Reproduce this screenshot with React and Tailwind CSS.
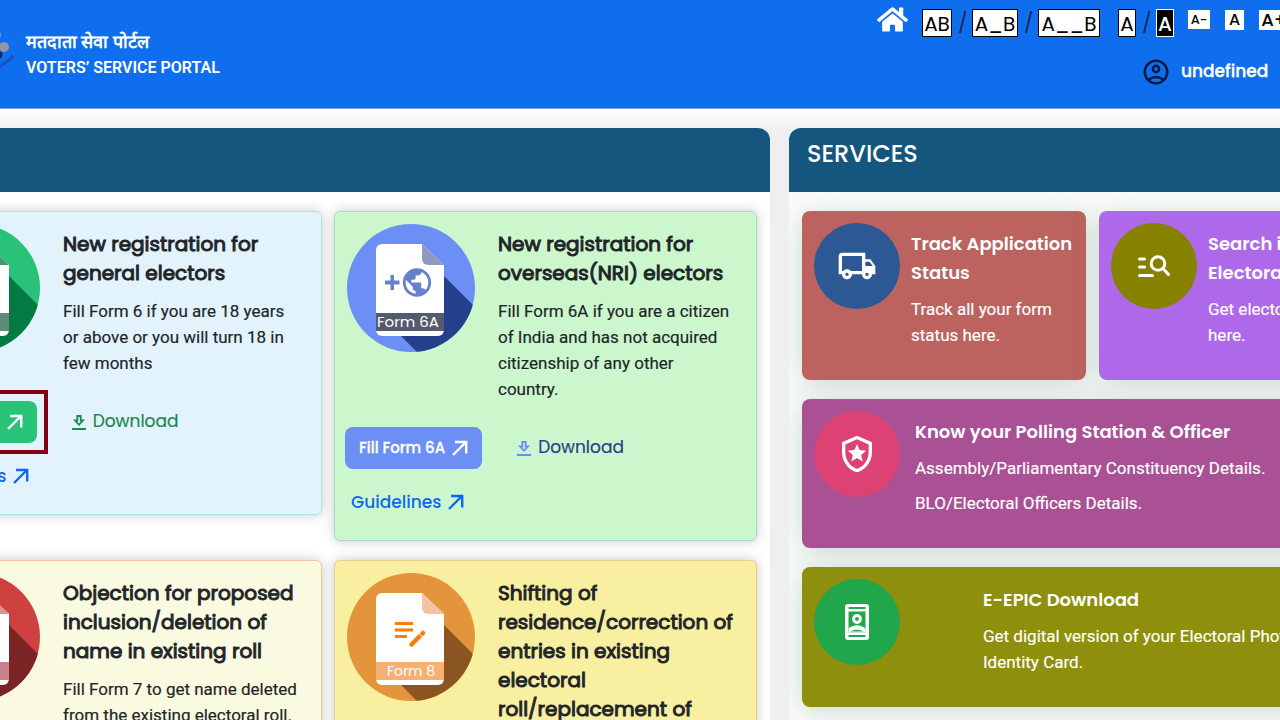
import React from 'react';
import { FaHome } from 'react-icons/fa';
import { MdPublic, MdOutlineLocalShipping, MdOutlineLocalPolice, MdOutlineAccountCircle } from 'react-icons/md';

const ArrowIcon = ({ className }) => (
    <svg viewBox="0 0 16 16" className={className} fill="none" stroke="currentColor" strokeWidth="2.4" aria-hidden="true">
        <path d="M1 15 14 2M3 2h11.200v11.500" />
    </svg>
);

const DownloadIcon = ({ className }) => (
    <svg viewBox="0 0 14 15" className={className} fill="none" stroke="currentColor" strokeWidth="1.8" aria-hidden="true">
        <path d="M5.300 1h3.400v4.500h2.300L7 9.800 3 5.500h2.300zM0 14h14" />
    </svg>
);

const SearchListIcon = () => (
    <svg viewBox="0 0 32 24" className="w-8 h-6" fill="none" stroke="currentColor" strokeWidth="3" strokeLinecap="round" aria-hidden="true">
        <path d="M1.500 5h5M1.500 13h5M1.500 21.500h13M25 14.500l5.500 6" />
        <circle cx="20" cy="9.500" r="6.800" />
    </svg>
);

const IdPhoneIcon = () => (
    <svg viewBox="0 0 24 36" className="w-6 h-9" aria-hidden="true">
        <rect x="0" y="0" width="24" height="36" rx="3" fill="currentColor" />
        <path d="M3.500 4h17M3.500 32h17" stroke="#21a64b" strokeWidth="1.800" />
        <rect x="3.500" y="7.500" width="17" height="21" fill="#21a64b" />
        <circle cx="12" cy="15" r="3.400" fill="none" stroke="currentColor" strokeWidth="3" />
        <path d="M3.500 25c4-5 13-5 17 0v3.500h-17z" fill="currentColor" />
        <path d="M5.500 27.500c3-2.500 10-2.500 13 0z" fill="#21a64b" />
    </svg>
);

// round badge with a sheet of paper and its long shadow
const FormBadge = ({ id, label, c, children }) => (
    <svg viewBox="0 0 128 128" className="w-32 h-32 flex-shrink-0" aria-hidden="true">
        <clipPath id={`badge-${id}`}><circle cx="64" cy="64" r="64" /></clipPath>
        <g clipPath={`url(#badge-${id})`}>
            <rect width="128" height="128" fill={c.disc} />
            <path d="M97 52 140 95v45H82L54 112z" fill={c.shade} />
        </g>
        <path d="M35 20h40l22 21v65a6 6 0 0 1-6 6H35a6 6 0 0 1-6-6V26a6 6 0 0 1 6-6z" fill="#fff" />
        <path d="M75 20l22 21H81a6 6 0 0 1-6-6z" fill={c.fold} />
        <rect x="29" y="89" width="68" height="18" fill={c.band} />
        <text x={label.length > 6 ? 61 : 64} y="103" textAnchor="middle" fill="#fff" fontSize={label.length > 6 ? 15 : 14} fontFamily="Poppins, Inter, sans-serif">{label}</text>
        {children}
    </svg>
);

const FORMS = [
    {
        id: '6', title: 'New registration for\ngeneral electors',
        text: 'Fill Form 6 if you are 18 years\nor above or you will turn 18 in\nfew months',
        card: 'bg-[#e2f3fb] border-[#a5ecdf]', button: 'bg-[#28c378]', marked: true,
        link: 'text-[#198754]', linkIcon: 'text-[#198754]',
        c: { disc: '#28c378', shade: '#037a41', fold: '#4a9370', band: '#5f8a73' },
    },
    {
        id: '6A', title: 'New registration for\noverseas(NRI) electors',
        text: 'Fill Form 6A if you are a citizen\nof India and has not acquired\ncitizenship of any other\ncountry.',
        card: 'bg-[#ccf7cd] border-[#a8d8c8]', button: 'bg-[#6b8ff5]',
        link: 'text-[#243f8c]', linkIcon: 'text-[#6b8ff5]',
        c: { disc: '#6b8ff5', shade: '#243f8c', fold: '#8f9bbd', band: '#555a6c' },
        art: (
            <g fill="#6581cc" color="#6581cc">
                <path d="M38 56.500h5.500V51h3.500v5.500h5.500v4H47V66h-3.500v-5.500H38z" />
                <MdPublic x="53" y="41.500" size="34" />
            </g>
        ),
    },
    {
        id: '7', title: 'Objection for proposed\ninclusion/deletion of\nname in existing roll',
        text: 'Fill Form 7 to get name deleted\nfrom the existing electoral roll.',
        card: 'bg-[#fafae0] border-[#f5c3a4]',
        c: { disc: '#cf4040', shade: '#7a2424', fold: '#dd9090', band: '#c98088' },
    },
    {
        id: '8', title: 'Shifting of\nresidence/correction of\nentries in existing\nelectoral\nroll/replacement of',
        card: 'bg-[#f9efa0] border-[#e8cf90]',
        c: { disc: '#e4943a', shade: '#8a5520', fold: '#f2c4a0', band: '#f5b073' },
        art: (
            <g stroke="#f97d0b" fill="none">
                <path d="M48 50.500h18M48 57h18M48 63.500h12" strokeWidth="3" />
                <path d="M64.500 71.500l8.500-8.500M75 61l1-1" strokeWidth="4.500" strokeLinecap="round" />
                <path d="M71.500 60l4.500 4.500" stroke="#fff" strokeWidth="1" />
            </g>
        ),
    },
];

const SERVICES = [
    {
        title: 'Track Application\nStatus', lines: ['Track all your form\nstatus here.'],
        card: 'bg-[#bc635f]', disc: 'bg-[#2c5894]', gap: 'gap-[11px]',
        icon: <MdOutlineLocalShipping size={40} />,
    },
    {
        title: 'Search in\nElectoral Roll', lines: ['Get electoral details\nhere.'],
        card: 'bg-[#ae69ea]', disc: 'bg-[#868200]', gap: 'gap-[11px]',
        icon: <SearchListIcon />,
    },
    {
        title: 'Know your Polling Station & Officer',
        lines: ['Assembly/Parliamentary Constituency Details.', 'BLO/Electoral Officers Details.'],
        card: 'bg-[#aa5095] col-span-2', disc: 'bg-[#dc4273]', gap: 'gap-[15px]',
        icon: <MdOutlineLocalPolice size={40} />,
    },
    {
        title: 'E-EPIC Download', lines: ['Get digital version of your Electoral Photo\nIdentity Card.'],
        card: 'bg-[#8e8f0c] col-span-2', disc: 'bg-[#21a64b]', gap: 'gap-[83px]',
        icon: <IdPhoneIcon />,
    },
];

const FormCard = ({ form }) => (
    <article className={`rounded-md border p-3 shadow-[0_0_12px_rgba(0,0,0,0.22)] ${form.card}`}>
        <div className="flex gap-[23px]">
            <FormBadge id={form.id} label={`Form ${form.id}`} c={form.c}>{form.art}</FormBadge>
            <div className="mt-1.5 text-[#212529] whitespace-pre">
                <h3 className="text-[20px] leading-[29px] [-webkit-text-stroke:0.05em]">{form.title}</h3>
                {form.text && <p className="mt-2.5 font-[Roboto] text-[17px] leading-[26px] [-webkit-text-stroke:0.01em]">{form.text}</p>}
            </div>
        </div>
        {form.button && (
            <>
                <div className="mt-[25px] flex items-center gap-[35px] whitespace-nowrap">
                    <div className={form.marked ? '-my-[11px] -ml-[13px] -mr-[11px] p-[7px] border-4 border-[#820014]' : '-ml-0.5'}>
                        <button className={`h-[42px] px-3.5 rounded-lg flex items-center gap-[7px] text-white text-[15px] font-medium [-webkit-text-stroke:0.02em] ${form.button}`}>
                            Fill Form {form.id} <ArrowIcon className="w-4 h-4" />
                        </button>
                    </div>
                    <a href="#download" className={`flex items-center gap-[7px] text-[17px] [-webkit-text-stroke:0.01em] ${form.link}`}>
                        <DownloadIcon className={`w-3.5 h-[15px] ${form.linkIcon}`} /> Download
                    </a>
                </div>
                <a href="#guidelines" className="mt-5 mb-[13px] ml-1 flex w-fit items-center gap-[7px] text-[17px] leading-[26px] font-medium text-[#0d66f5]">
                    Guidelines <ArrowIcon className="w-4 h-4" />
                </a>
            </>
        )}
    </article>
);

const ServiceCard = ({ s }) => (
    <article className={`rounded-lg p-3 pb-8 flex text-white shadow-[0_4px_28px_rgba(40,100,70,0.22)] ${s.gap} ${s.card}`}>
        <div className={`w-[86px] h-[86px] rounded-full flex-shrink-0 flex items-center justify-center ${s.disc}`}>{s.icon}</div>
        <div className="mt-1.5 whitespace-pre">
            <h3 className="text-[18px] leading-[29px] font-semibold">{s.title}</h3>
            {s.lines.map(l => <p key={l} className="mt-[9px] font-[Roboto] text-[17px] leading-[26px] [-webkit-text-stroke:0.01em]">{l}</p>)}
        </div>
    </article>
);

const Logo = () => (
    <svg viewBox="0 0 60 50" className="w-[60px] h-[50px]" aria-hidden="true">
        <circle cx="42" cy="10" r="5" fill="#6f9ccb" />
        <circle cx="50" cy="22" r="5" fill="#93979f" />
        <circle cx="45" cy="30" r="3.500" fill="#10295c" />
        <path d="M45 41C50 39 55 36 59 31" fill="none" stroke="#1f45a8" strokeWidth="3.500" strokeDasharray="1.500 0.800" />
    </svg>
);

const BOX = 'h-7 border text-[20px] leading-7';
const SMALL = 'bg-white text-black font-medium';

const Slash = () => <span className="w-2 text-center text-[20px] leading-7 text-[#10264f]">/</span>;

const Header = () => (
    <header className="h-[109px] bg-[#0e6eee] border-b border-[#7ba4f0] flex justify-between">
        <div className="flex pt-[25px] pl-[68px] gap-3 text-white">
            <Logo />
            <div className="pt-1 leading-[26px] font-bold font-[Roboto]">
                <p lang="hi" className="text-[18px] leading-[26px]">मतदाता सेवा पोर्टल</p>
                <p className="text-[16px] leading-[26px] font-semibold">VOTERS’ SERVICE PORTAL</p>
            </div>
        </div>
        <div className="w-[519px] pt-1 whitespace-nowrap">
            <div className="flex items-start">
                <a href="#home" aria-label="Home" className="text-white"><FaHome size={31} /></a>
                <div className="ml-3.5 mt-[5px] flex gap-1.5">
                    <button className={`${BOX} w-[30px] bg-white border-black`}>AB</button><Slash />
                    <button className={`${BOX} w-[46px] bg-white border-black`}>A_B</button><Slash />
                    <button className={`${BOX} w-[62px] bg-white border-black`}>A__B</button>
                </div>
                <div className="ml-[18px] mt-[5px] flex gap-1.5">
                    <button className={`${BOX} w-[18px] bg-white border-black`}>A</button><Slash />
                    <button className={`${BOX} w-[18px] bg-black border-white text-white font-medium`}>A</button>
                </div>
                <div className="ml-3.5 mt-1.5 flex items-start gap-[15px]">
                    <button className={`${SMALL} w-[22px] h-[19px] text-[13px] leading-[19px]`}>A-</button>
                    <button className={`${SMALL} w-[19px] h-5 text-[16px] leading-5`}>A</button>
                    <button className={`${SMALL} w-[30px] h-5 text-[18px] leading-5`}>A+</button>
                </div>
            </div>
            <div className="mt-5 pl-[264px] flex items-center gap-2.5 text-white text-[17px] font-medium [-webkit-text-stroke:0.02em]">
                <MdOutlineAccountCircle size={30} className="text-[#06183c]" /> undefined
            </div>
        </div>
    </header>
);

const Panel = ({ title, className, children }) => (
    <section className="rounded-t-xl overflow-hidden bg-white">
        <h2 className="h-16 px-[18px] pt-2 bg-[#15567f] text-white text-[24px] leading-9 font-medium">{title}</h2>
        <div className={`grid grid-cols-2 gap-y-[19px] px-[13px] py-[19px] ${className}`}>{children}</div>
    </section>
);

export default function App() {
    return (
        <div className="h-screen overflow-hidden bg-[#efefef] font-[Poppins,Inter,sans-serif]">
            {/* the page is wider than the window on both sides */}
            <div className="-ml-[114px] -mr-[116px]">
                <Header />
                <main className="pt-[19px] grid grid-cols-[884fr_607fr] gap-[19px] bg-[linear-gradient(#fff,#efefef_20px)]">
                    <Panel className="gap-x-3 items-start">
                        {FORMS.map(f => <FormCard key={f.id} form={f} />)}
                    </Panel>
                    <Panel title="SERVICES" className="gap-x-[13px] content-start bg-[#fafcfb]">
                        {SERVICES.map(s => <ServiceCard key={s.title} s={s} />)}
                    </Panel>
                </main>
            </div>
        </div>
    );
}
